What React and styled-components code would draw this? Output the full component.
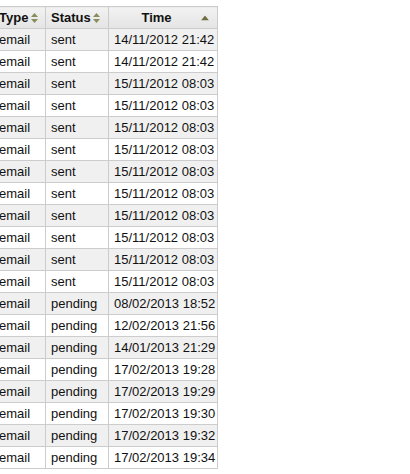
import React from "react";
import styled, { createGlobalStyle } from "styled-components";

const Global = createGlobalStyle`
  html, body { margin: 0; padding: 0; background: #fff; }
  body { font-family: "Liberation Sans", Arial, sans-serif; }
`;

const Page = styled.div`
  padding-top: 6px;
  margin-left: -7px;
`;

const Table = styled.table`
  border-collapse: collapse;
  table-layout: fixed;
  width: 225px;
  font-size: 13px;
  color: #111;
  border: 1px solid #ccc;
`;

const Col = styled.col`
  width: ${(p) => p.$w}px;
`;

const Th = styled.th`
  position: relative;
  height: 21px;
  padding: 0 18px 0 5px;
  background: linear-gradient(#f2f2f2, #e4e4e4);
  border: 1px solid #ccc;
  font-weight: bold;
  text-align: ${(p) => p.$align || "left"};
  white-space: nowrap;
  line-height: 21px;
`;

const SortIcon = styled.svg`
  position: absolute;
  right: ${(p) => p.$right}px;
  top: 50%;
  transform: translateY(-50%);
`;

const Tr = styled.tr`
  background: ${(p) => (p.$odd ? "#f0f0f0" : "#ffffff")};
`;

const Td = styled.td`
  height: 21px;
  padding: 0 4px 0 5px;
  border: 1px solid #ccc;
  border-top: none;
  white-space: nowrap;
  overflow: hidden;
  line-height: 21px;
`;

const Both = ({ right }) => (
  <SortIcon $right={right} width="7" height="10" viewBox="0 0 7 10">
    <polygon points="3.5,0 7,4 0,4" fill="#8c8c5a" />
    <polygon points="0,6 7,6 3.5,10" fill="#8c8c5a" />
  </SortIcon>
);

const Up = ({ right }) => (
  <SortIcon $right={right} width="8" height="5" viewBox="0 0 8 5">
    <polygon points="4,0 8,5 0,5" fill="#6e6e40" />
  </SortIcon>
);

const rows = [
  ["sent", "14/11/2012 21:42"],
  ["sent", "14/11/2012 21:42"],
  ["sent", "15/11/2012 08:03"],
  ["sent", "15/11/2012 08:03"],
  ["sent", "15/11/2012 08:03"],
  ["sent", "15/11/2012 08:03"],
  ["sent", "15/11/2012 08:03"],
  ["sent", "15/11/2012 08:03"],
  ["sent", "15/11/2012 08:03"],
  ["sent", "15/11/2012 08:03"],
  ["sent", "15/11/2012 08:03"],
  ["sent", "15/11/2012 08:03"],
  ["pending", "08/02/2013 18:52"],
  ["pending", "12/02/2013 21:56"],
  ["pending", "14/01/2013 21:29"],
  ["pending", "17/02/2013 19:28"],
  ["pending", "17/02/2013 19:29"],
  ["pending", "17/02/2013 19:30"],
  ["pending", "17/02/2013 19:32"],
  ["pending", "17/02/2013 19:34"],
];

export default function App() {
  return (
    <Page>
      <Global />
      <Table>
        <colgroup>
          <Col $w={52} />
          <Col $w={63} />
          <Col $w={109} />
        </colgroup>
        <thead>
          <tr>
            <Th>
              Type
              <Both right={7} />
            </Th>
            <Th>
              Status
              <Both right={8} />
            </Th>
            <Th $align="center">
              Time
              <Up right={8} />
            </Th>
          </tr>
        </thead>
        <tbody>
          {rows.map(([status, time], i) => (
            <Tr key={i} $odd={i % 2 === 0}>
              <Td>email</Td>
              <Td>{status}</Td>
              <Td>{time}</Td>
            </Tr>
          ))}
        </tbody>
      </Table>
    </Page>
  );
}
